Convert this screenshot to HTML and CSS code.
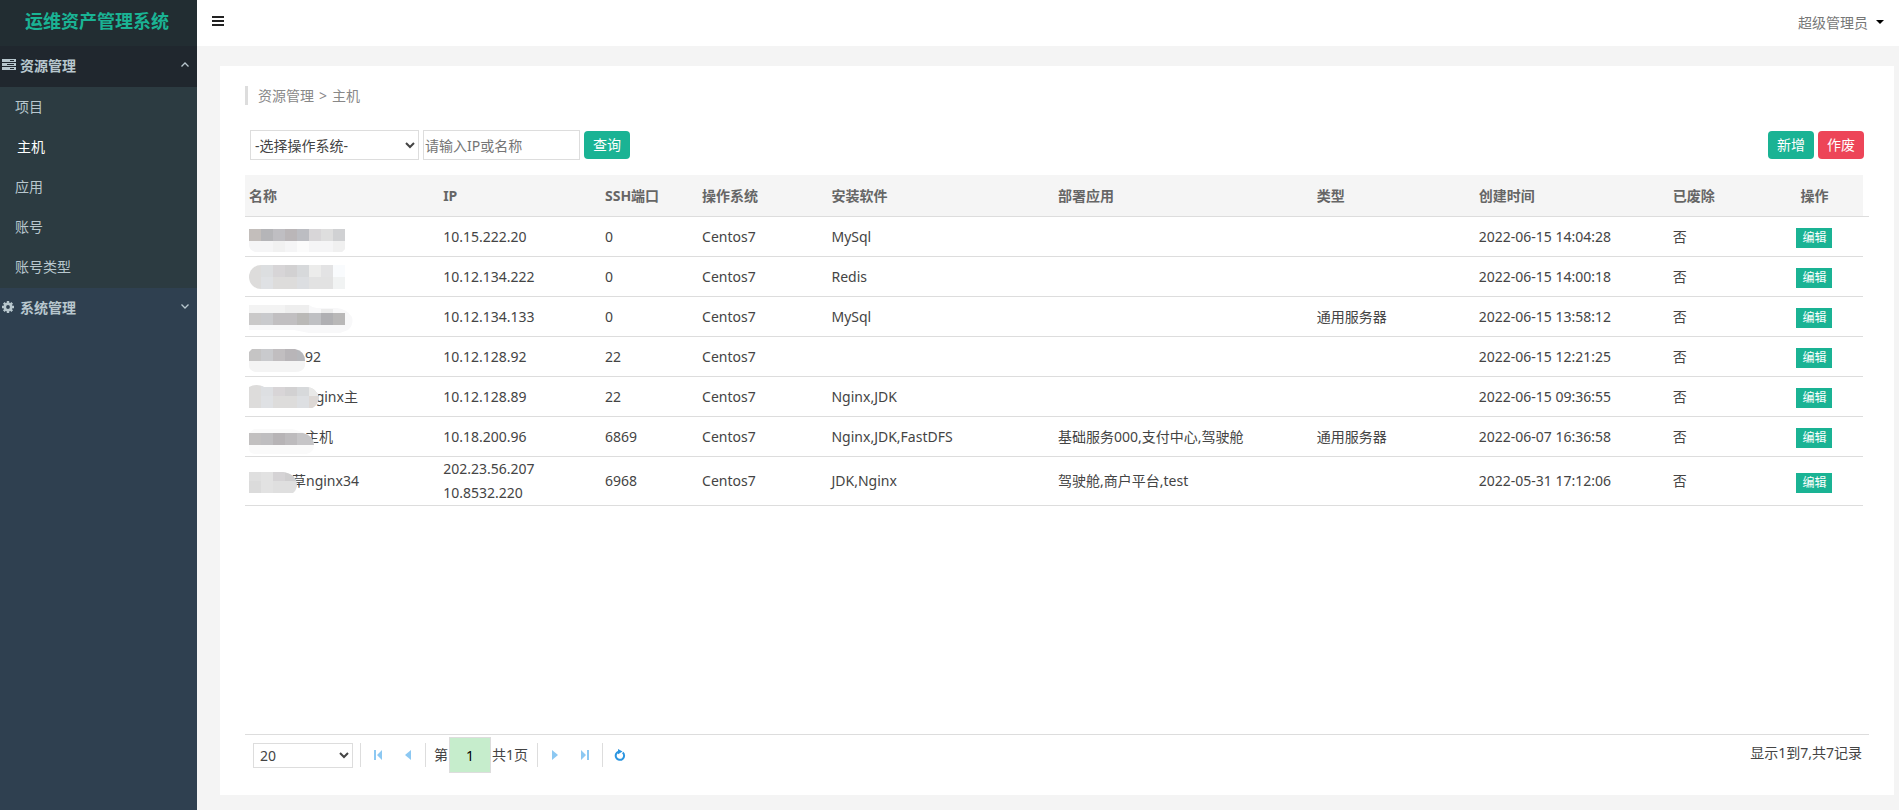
FILE: index.html
```html
<!DOCTYPE html>
<html lang="zh-CN">
<head>
<meta charset="utf-8">
<title>运维资产管理系统</title>
<link rel="stylesheet" href="styles.css">
</head>
<body>
<div class="app">
  <aside class="sidebar">
    <h1 class="brand">运维资产管理系统</h1>
    <nav>
      <button class="group open" type="button">
        <svg class="group-icon" width="14" height="12" viewBox="0 0 14 12"><g fill="#b8c7ce"><rect width="14" height="3"/><rect y="4" width="14" height="3"/><rect y="8" width="14" height="3"/></g><g fill="#20272e"><rect x="8" y="1" width="4" height="1"/><rect x="5" y="5" width="7" height="1"/><rect x="8" y="9" width="4" height="1"/></g></svg>
        <span>资源管理</span>
        <svg class="chev" width="8" height="5" viewBox="0 0 8 5"><path d="M.5 4.5 4 1 7.5 4.5" fill="none" stroke="#b8c7ce" stroke-width="1.3"/></svg>
      </button>
      <ul class="submenu">
        <li><a href="#">项目</a></li>
        <li><a href="#" class="active">主机</a></li>
        <li><a href="#">应用</a></li>
        <li><a href="#">账号</a></li>
        <li><a href="#">账号类型</a></li>
      </ul>
      <button class="group" type="button">
        <svg class="group-icon" width="12" height="12" viewBox="0 0 12 12"><circle cx="6" cy="6" r="3.2" fill="none" stroke="#b8c7ce" stroke-width="2.6"/><path d="M6 0v2.2M6 9.800V12M0 6h2.200M9.800 6H12M1.800 1.800l1.500 1.500M8.700 8.700l1.500 1.500M10.200 1.800 8.700 3.300M3.300 8.700l-1.500 1.500" stroke="#b8c7ce" stroke-width="2.400"/></svg>
        <span class="wide-label">系统管理</span>
        <svg class="chev" width="8" height="5" viewBox="0 0 8 5"><path d="M.5.5 4 4 7.500.5" fill="none" stroke="#b8c7ce" stroke-width="1.300"/></svg>
      </button>
    </nav>
  </aside>

  <div class="main">
    <header class="topbar">
      <button class="toggle" type="button" aria-label="菜单"><svg width="12" height="10" viewBox="0 0 12 10"><path d="M0 1h12M0 5h12M0 9h12" stroke="#222" stroke-width="2"/></svg></button>
      <button class="user" type="button">超级管理员<svg width="8" height="4" viewBox="0 0 8 4"><path d="M0 0h8L4 4z" fill="#000"/></svg></button>
    </header>

    <main class="content">
      <section class="panel">
        <div class="crumb"><span>资源管理</span><span>&gt;</span><span>主机</span></div>
        <form class="tools">
          <select class="os" aria-label="操作系统"><option>-选择操作系统-</option></select>
          <input class="key" type="text" placeholder="请输入IP或名称" aria-label="IP或名称">
          <button class="btn search" type="button">查询</button>
          <div class="actions">
            <button class="btn" type="button">新增</button>
            <button class="btn danger" type="button">作废</button>
          </div>
        </form>

        <div class="grid">
          <table>
            <colgroup><col class="c12"><col class="c10"><col class="c6"><col class="c8"><col class="c14"><col class="c16"><col class="c10"><col class="c12"><col class="c6"><col class="c6"></colgroup>
            <thead>
              <tr><th>名称</th><th>IP</th><th>SSH端口</th><th>操作系统</th><th>安装软件</th><th>部署应用</th><th>类型</th><th>创建时间</th><th>已废除</th><th class="mid">操作</th></tr>
            </thead>
            <tbody>
              <tr>
                <td><svg class="mask" width="96" height="23"><clipPath id="m1"><path d="M0 0h96v20l-3 3H6Q0 21 0 16z"/></clipPath><g clip-path="url(#m1)"><rect width="12" height="12" fill="#c3bebb"/><rect x="12" width="12" height="12" fill="#b5b5b8"/><rect x="24" width="12" height="12" fill="#bfbec2"/><rect x="36" width="12" height="12" fill="#bab6b8"/><rect x="48" width="12" height="12" fill="#bcbdc2"/><rect x="60" width="12" height="12" fill="#d8d6d8"/><rect x="72" width="12" height="12" fill="#dedede"/><rect x="84" width="12" height="12" fill="#d0d1d3"/><rect y="12" width="96" height="11" fill="#f5f5f6"/><rect x="24" y="12" width="12" height="11" fill="#f1f1f1"/><rect x="48" y="12" width="12" height="11" fill="#fbfbfb"/><rect x="84" y="12" width="12" height="11" fill="#f0f0f0"/></g></svg></td>
                <td>10.15.222.20</td><td>0</td><td>Centos7</td><td>MySql</td><td></td><td></td><td>2022-06-15 14:04:28</td><td>否</td><td class="mid"><button class="edit" type="button">编辑</button></td>
              </tr>
              <tr>
                <td><svg class="mask high" width="96" height="24"><clipPath id="m2"><path d="M12 0h84v24H12A12 12 0 0 1 12 0z"/></clipPath><g clip-path="url(#m2)"><rect width="96" height="24" fill="#dddcdb"/><rect x="12" width="12" height="12" fill="#dcdee0"/><rect x="24" width="12" height="12" fill="#d7d5d7"/><rect x="36" width="12" height="12" fill="#d2d1d2"/><rect x="48" width="12" height="12" fill="#d7d9db"/><rect x="60" width="12" height="12" fill="#ececeb"/><rect x="72" width="12" height="12" fill="#e3e3e4"/><rect x="84" width="12" height="12" fill="#f9fbfd"/><rect x="12" y="12" width="12" height="12" fill="#dfe1e4"/><rect x="48" y="12" width="12" height="12" fill="#dcdee1"/><rect x="60" y="12" width="24" height="12" fill="#e2e2e2"/><rect x="84" y="12" width="12" height="12" fill="#f1f3f3"/></g></svg></td>
                <td>10.12.134.222</td><td>0</td><td>Centos7</td><td>Redis</td><td></td><td></td><td>2022-06-15 14:00:18</td><td>否</td><td class="mid"><button class="edit" type="button">编辑</button></td>
              </tr>
              <tr>
                <td><svg class="mask high" width="104" height="28"><path d="M0 0h60q4 3 8 3h20q10 1 15 9 2 8-4 13l-8 3H60L45 25H0z" fill="#f8f8f9"/><rect width="36" height="8" fill="#f3f3f3"/><rect x="36" width="24" height="8" fill="#eee"/><rect x="72" y="4" width="12" height="4" fill="#ececec"/><rect y="8" width="12" height="12" fill="#cac9c9"/><rect x="12" y="8" width="12" height="12" fill="#c9cacd"/><rect x="24" y="8" width="24" height="12" fill="#c1bfc1"/><rect x="48" y="8" width="12" height="12" fill="#bab9b7"/><rect x="60" y="8" width="12" height="12" fill="#bfc0c3"/><rect x="72" y="8" width="12" height="12" fill="#b0b0b3"/><rect x="84" y="8" width="12" height="12" fill="#b9b8b8"/></svg></td>
                <td>10.12.134.133</td><td>0</td><td>Centos7</td><td>MySql</td><td></td><td>通用服务器</td><td>2022-06-15 13:58:12</td><td>否</td><td class="mid"><button class="edit" type="button">编辑</button></td>
              </tr>
              <tr>
                <td class="n92">92<svg class="mask" width="56" height="23"><clipPath id="m4"><path d="M3 0h43q10 2 10 12v5q-2 6-10 6H6q-6-2-6-6V3z"/></clipPath><g clip-path="url(#m4)"><rect width="12" height="12" fill="#c5c4c4"/><rect x="12" width="12" height="12" fill="#c9cacd"/><rect x="24" width="12" height="12" fill="#c1bec0"/><rect x="36" width="12" height="12" fill="#b8b5b8"/><rect x="48" width="12" height="12" fill="#b6b7bb"/><rect y="12" width="60" height="11" fill="#f4f4f4"/></g></svg></td>
                <td>10.12.128.92</td><td>22</td><td>Centos7</td><td></td><td></td><td></td><td>2022-06-15 12:21:25</td><td>否</td><td class="mid"><button class="edit" type="button">编辑</button></td>
              </tr>
              <tr>
                <td class="n89">nginx主<svg class="mask high" width="70" height="23"><clipPath id="m5"><path d="M0 2q8-4 15 0h43q10 1 12 11-2 8-7 10H0z"/></clipPath><g clip-path="url(#m5)"><rect width="72" height="24" fill="#dddcdb"/><rect x="12" width="12" height="11" fill="#dddfe2"/><rect x="24" width="12" height="11" fill="#d8d5d7"/><rect x="36" width="12" height="11" fill="#d2d1d2"/><rect x="48" width="12" height="11" fill="#d7d9db"/><rect x="60" width="12" height="11" fill="#e9e9e8"/><rect x="12" y="11" width="12" height="12" fill="#dfe1e4"/><rect x="48" y="11" width="12" height="12" fill="#dddfe2"/><rect x="60" y="11" width="12" height="12" fill="#ddd8d5"/></g></svg></td>
                <td>10.12.128.89</td><td>22</td><td>Centos7</td><td>Nginx,JDK</td><td></td><td></td><td>2022-06-15 09:36:55</td><td>否</td><td class="mid"><button class="edit" type="button">编辑</button></td>
              </tr>
              <tr>
                <td class="n96">主机<svg class="mask" width="65" height="26"><path d="M5 0h38q8 2 12 4 10 5 10 12 0 8-8 9H5Q0 24 0 20V4z" fill="#fafafa"/><clipPath id="m6"><path d="M0 4h54q10 2 11 12H0z"/></clipPath><g clip-path="url(#m6)"><rect y="4" width="12" height="12" fill="#c2c0c0"/><rect x="12" y="4" width="12" height="12" fill="#bfbec0"/><rect x="24" y="4" width="12" height="12" fill="#b7b4b6"/><rect x="36" y="4" width="12" height="12" fill="#bdbbbd"/><rect x="48" y="4" width="18" height="12" fill="#c6c5c7"/></g></svg></td>
                <td>10.18.200.96</td><td>6869</td><td>Centos7</td><td>Nginx,JDK,FastDFS</td><td>基础服务000,支付中心,驾驶舱</td><td>通用服务器</td><td>2022-06-07 16:36:58</td><td>否</td><td class="mid"><button class="edit" type="button">编辑</button></td>
              </tr>
              <tr>
                <td class="n34">草nginx34<svg class="mask low" width="48" height="21"><clipPath id="m7"><path d="M0 0h34q14 2 14 14-1 5-4 7H0z"/></clipPath><g clip-path="url(#m7)"><rect width="48" height="21" fill="#dfdfdf"/><rect x="12" width="12" height="21" fill="#e2e2e2"/><rect x="24" width="12" height="9" fill="#d5d3d5"/><rect x="36" width="12" height="9" fill="#cfcecf"/><rect y="9" width="12" height="12" fill="#dbdbdb"/></g></svg></td>
                <td>202.23.56.207<br>10.8532.220</td><td>6968</td><td>Centos7</td><td>JDK,Nginx</td><td>驾驶舱,商户平台,test</td><td></td><td>2022-05-31 17:12:06</td><td>否</td><td class="mid"><button class="edit" type="button">编辑</button></td>
              </tr>
            </tbody>
          </table>
        </div>

        <footer class="pager">
          <select class="size" aria-label="每页条数"><option>20</option></select>
          <div class="nav-part">
            <button type="button" aria-label="首页"><svg width="8" height="10" viewBox="0 0 8 10"><path d="M0 0h2v10H0zM8 0v10L3 5z" fill="#8cc8f2"/></svg></button>
            <button type="button" aria-label="上一页"><svg width="6" height="10" viewBox="0 0 6 10"><path d="M6 0v10L0 5z" fill="#8cc8f2"/></svg></button>
          </div>
          <div class="page-part">
            <label for="page">第</label>
            <input id="page" type="text" value="1">
            <span>共1页</span>
          </div>
          <div class="nav-part">
            <button type="button" aria-label="下一页"><svg width="6" height="10" viewBox="0 0 6 10"><path d="M0 0v10l6-5z" fill="#8cc8f2"/></svg></button>
            <button type="button" aria-label="末页"><svg width="8" height="10" viewBox="0 0 8 10"><path d="M6 0h2v10H6zM0 0v10l5-5z" fill="#8cc8f2"/></svg></button>
          </div>
          <div class="nav-part">
            <button type="button" aria-label="刷新"><svg width="12" height="12" viewBox="0 0 12 12"><path d="M4.500 2.700A4.200 4.200 0 1 0 8.700 3.500" fill="none" stroke="#2b95e0" stroke-width="2"/><path d="M4 0l4.500 2.600L4 5.200z" fill="#2b95e0"/></svg></button>
          </div>
          <p class="summary">显示1到7,共7记录</p>
        </footer>
      </section>
    </main>
  </div>
</div>
</body>
</html>
```

FILE: styles.css
```css
* { box-sizing: border-box; }
body, h1, ul, p { margin: 0; padding: 0; }
body, button, input, select {
  font-family: "Noto Sans", "Noto Sans CJK SC", sans-serif;
  font-size: 14px;
}
body { color: #444; line-height: 24px; background: #f4f4f4; }
button { border: 0; background: none; padding: 0; cursor: pointer; }
svg { display: block; }

.app { display: grid; grid-template-columns: 197px minmax(0, 1fr); min-height: 100vh; }

/* sidebar */
.sidebar { background: #2f4050; }
.brand {
  padding: 6px 0 10px 25px;
  background: #222d32;
  color: #1ab394;
  font-size: 18px;
  line-height: 30px;
  white-space: nowrap;
}
.group {
  display: flex;
  align-items: center;
  width: 100%;
  height: 41px;
  padding: 0 8px 2px 2px;
  color: #b8c7ce;
  font-weight: bold;
  line-height: 24px;
}
.group.open { background: #20272e; }
.group-icon { flex: none; margin-bottom: 2px; }
.group span { margin-left: 4px; }
.group .wide-label { margin-left: 6px; }
.chev { margin-left: auto; margin-bottom: 2px; }
.submenu { list-style: none; background: #2c3b41; padding-bottom: 1px; }
.submenu a {
  display: block;
  padding: 0 15px;
  color: #b8c7ce;
  line-height: 40px;
  text-decoration: none;
}
.submenu .active { padding-left: 17px; color: #fff; }

/* top bar */
.main { display: flex; flex-direction: column; }
.topbar {
  display: flex;
  align-items: center;
  justify-content: space-between;
  height: 46px;
  padding: 0 15px;
  background: #fff;
}
.toggle { padding: 0 0 4px; }
.user { display: flex; align-items: center; gap: 8px; padding-bottom: 3px; color: #777; }

.content { flex: 1; display: flex; padding: 20px 5px 15px 23px; }
.panel { flex: 1; min-width: 0; display: flex; flex-direction: column; padding: 20px 25px 22px; background: #fff; }
.crumb { display: flex; gap: 5px; border-left: 3px solid #ddd; padding-left: 10px; color: #888; line-height: 19px; }

/* search tools */
.tools { display: flex; align-items: center; gap: 4px; padding: 25px 5px 15px; }
.tools select, .tools input, .size { border: 1px solid #ddd; background: #fff; color: #444; }
.tools select, .tools input { height: 30px; }
.os { width: 169px; padding: 0; }
.key { width: 157px; padding: 0 1px; }
.key::placeholder { color: #757575; }
.btn {
  width: 46px;
  height: 28px;
  padding-bottom: 2px;
  border-radius: 4px;
  background: #1ab394;
  color: #fff;
}
.danger { background: #ed4558; }
.actions { display: flex; gap: 4px; margin-left: auto; }

/* host table */
.grid { flex: 1; }
table {
  width: calc(100% - 6px);
  table-layout: fixed;
  border-collapse: separate;
  border-spacing: 0;
}
.c6 { width: 6%; }
.c8 { width: 8%; }
.c10 { width: 10%; }
.c12 { width: 12%; }
.c14 { width: 14%; }
.c16 { width: 16%; }
th, td {
  position: relative;
  padding: 0 4px;
  border-bottom: 1px solid #ddd;
  text-align: left;
  white-space: nowrap;
}
th { height: 42px; background: #f5f5f5; color: #666; }
td { height: 40px; }
th.mid, td.mid { text-align: center; padding: 0; }
th:last-child::after {
  content: "";
  position: absolute;
  right: -6px;
  bottom: -1px;
  width: 6px;
  height: 1px;
  background: #ddd;
}
.mask { position: absolute; left: 4px; top: 12px; }
.mask.high { top: 8px; }
.mask.low { top: 15px; }
.n92 { padding-left: 60px; }
.n89 { padding-left: 62px; }
.n96 { padding-left: 60px; }
.n34 { padding-left: 47px; }
.edit {
  display: block;
  width: 36px;
  height: 20px;
  margin: 3px auto 0;
  background: #1ab394;
  color: #fff;
  font-size: 12px;
  line-height: 20px;
}

/* pager */
.pager {
  display: flex;
  align-items: center;
  height: 39px;
  border-top: 1px solid #ddd;
  padding: 2px 7px 0 8px;
}
.size { width: 100px; height: 25px; padding: 0 2px; margin-right: 7px; }
.nav-part, .page-part { display: flex; align-items: center; height: 24px; border-left: 1px solid #ddd; }
.nav-part { padding: 0 2px; }
.nav-part button { display: grid; place-items: center; width: 30px; height: 24px; }
.page-part { width: 112px; padding-left: 8px; gap: 1px; }
.page-part input {
  width: 42px;
  height: 36px;
  border: 1px solid #ddd;
  background: #c6edcc;
  color: #000;
  text-align: center;
}
.summary { margin-left: auto; padding-bottom: 4px; }
```
